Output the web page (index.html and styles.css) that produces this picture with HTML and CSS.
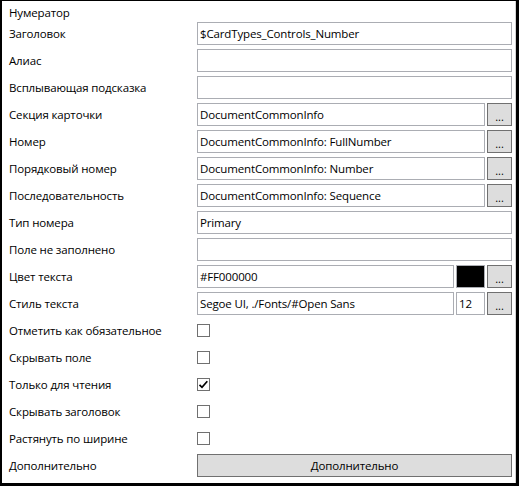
FILE: index.html
```html
<!DOCTYPE html>
<html lang="ru">
<head>
<meta charset="utf-8">
<title>Нумератор</title>
<link rel="stylesheet" href="styles.css">
</head>
<body>
<div class="window">
  <div class="panel">
    <div class="title">Нумератор</div>
    <div class="form">
      <div class="label">Заголовок</div>
      <div class="ctl"><div class="input">$CardTypes_Controls_Number</div></div>

      <div class="label">Алиас</div>
      <div class="ctl"><div class="input"></div></div>

      <div class="label">Всплывающая подсказка</div>
      <div class="ctl"><div class="input"></div></div>

      <div class="label">Секция карточки</div>
      <div class="ctl pick"><div class="input">DocumentCommonInfo</div><div class="btn dots">...</div></div>

      <div class="label">Номер</div>
      <div class="ctl pick"><div class="input">DocumentCommonInfo: FullNumber</div><div class="btn dots">...</div></div>

      <div class="label">Порядковый номер</div>
      <div class="ctl pick"><div class="input">DocumentCommonInfo: Number</div><div class="btn dots">...</div></div>

      <div class="label">Последовательность</div>
      <div class="ctl pick"><div class="input">DocumentCommonInfo: Sequence</div><div class="btn dots">...</div></div>

      <div class="label">Тип номера</div>
      <div class="ctl"><div class="input">Primary</div></div>

      <div class="label">Поле не заполнено</div>
      <div class="ctl"><div class="input"></div></div>

      <div class="label">Цвет текста</div>
      <div class="ctl triple"><div class="input">#FF000000</div><div class="swatch"></div><div class="btn dots">...</div></div>

      <div class="label">Стиль текста</div>
      <div class="ctl triple"><div class="input">Segoe UI, ./Fonts/#Open Sans</div><div class="input">12</div><div class="btn dots">...</div></div>

      <div class="label">Отметить как обязательное</div>
      <div class="ctl check"><span class="box"></span></div>

      <div class="label">Скрывать поле</div>
      <div class="ctl check"><span class="box"></span></div>

      <div class="label">Только для чтения</div>
      <div class="ctl check"><span class="box"><svg width="11" height="11" viewBox="0 0 11 11"><path d="M1.5 5.8 L4 8.3 L9.3 2.2" fill="none" stroke="#000" stroke-width="1.7"/></svg></span></div>

      <div class="label">Скрывать заголовок</div>
      <div class="ctl check"><span class="box"></span></div>

      <div class="label">Растянуть по ширине</div>
      <div class="ctl check"><span class="box"></span></div>

      <div class="label">Дополнительно</div>
      <div class="ctl"><div class="btn wide">Дополнительно</div></div>
    </div>
  </div>
</div>
</body>
</html>
```
FILE: styles.css
```css
html, body {
  margin: 0;
  padding: 0;
  background: #000;
  height: 486px;
  overflow: hidden;
}
.window {
  padding: 1px 3px 3px 2px;
  height: 482px;
}
.panel {
  background: #fff;
  height: 482px;
  box-sizing: border-box;
  border-right: 1px solid #d4d4d4;
  padding: 0 3px 0 7px;
  font-family: "Open Sans", "Noto Sans", sans-serif;
  font-size: 11.5px;
  letter-spacing: -0.15px;
  color: #000;
}
.title {
  height: 21px;
  line-height: 23px;
  white-space: nowrap;
}
.form {
  display: grid;
  grid-template-columns: 188px 315px;
  grid-auto-rows: 23px;
  row-gap: 4px;
}
.label {
  line-height: 23px;
  white-space: nowrap;
}
.ctl {
  display: grid;
  grid-template-columns: 1fr;
  height: 23px;
}
.ctl.pick {
  grid-template-columns: 1fr 25px;
  column-gap: 2px;
}
.ctl.triple {
  grid-template-columns: 1fr 29px 25px;
  column-gap: 2px;
}
.input {
  box-sizing: border-box;
  height: 23px;
  border: 1px solid #abadb3;
  background: #fff;
  padding: 0 2px;
  line-height: 21px;
  white-space: nowrap;
  overflow: hidden;
}
.btn {
  box-sizing: border-box;
  height: 23px;
  border: 1px solid #707070;
  background: #dddddd;
  text-align: center;
  line-height: 21px;
}
.btn.dots {
  font-size: 11px;
  letter-spacing: 0;
  line-height: 25px;
}
.swatch {
  box-sizing: border-box;
  height: 23px;
  border: 1px solid #abadb3;
  background: #000;
}
.check {
  align-items: center;
}
.box {
  box-sizing: border-box;
  width: 13px;
  height: 13px;
  border: 1px solid #707070;
  background: #fff;
  display: flex;
  align-items: center;
  justify-content: center;
}
.box svg {
  display: block;
}
```
